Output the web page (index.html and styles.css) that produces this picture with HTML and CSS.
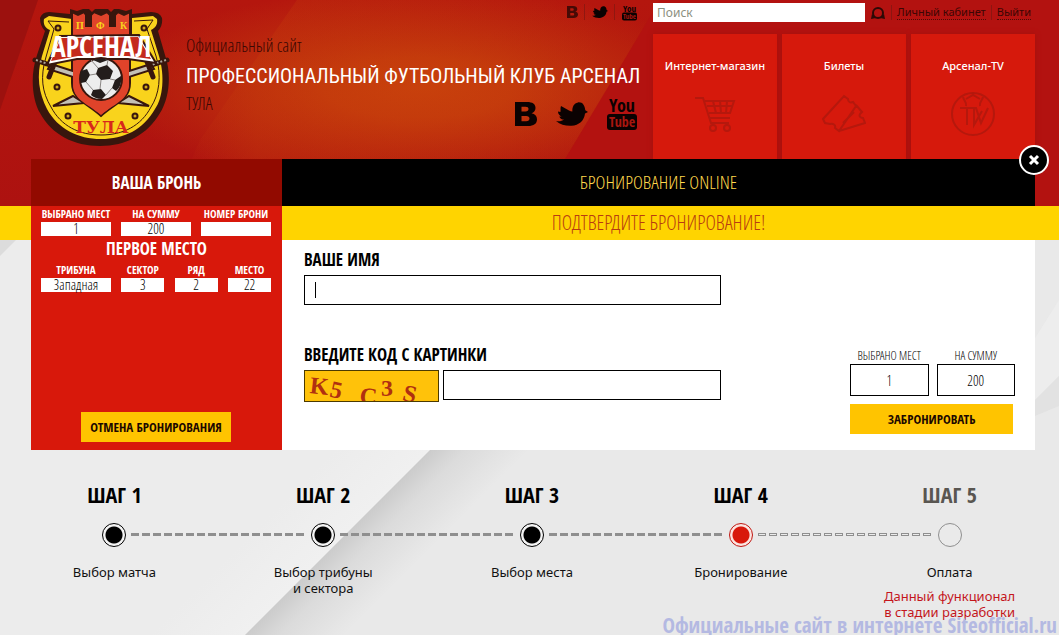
FILE: index.html
```
<!DOCTYPE html>
<html lang="ru">
<head>
<meta charset="utf-8">
<title>Бронирование online</title>
<link rel="stylesheet" href="styles.css">
</head>
<body>
<svg class="defs" aria-hidden="true">
  <symbol id="vk" viewBox="0 0 22 24"><path fill-rule="evenodd" d="M0 0h12c5.500 0 8.500 2 8.500 6 0 2.700-1.500 4.400-4 5.200 3.400.7 5.500 2.800 5.500 6 0 4.500-3.300 6.800-9 6.800H0zM6.500 4.700v4.700h4c2 0 3-.8 3-2.400s-1-2.300-3-2.300zM6.500 14v5.200h4.700c2.200 0 3.300-.9 3.300-2.600S13.400 14 11.200 14z"/></symbol>
  <symbol id="tw" viewBox="0 0 32 24"><path d="M0 19c3 .8 6 .2 8-1.400-2.500 0-4-1.300-4.700-3.200h2.400C3.500 13.600 2 12 2 9.500l2.400.6C5 8 4 6.500 5 4l8 4.500c1.200.6 2.300.9 3.400 1C16 5 18 1 22 .4c2.300-.3 4.300.6 5.500 2.300 1 1.600 1.500 3.500 1.800 5.500L32 10l-3 1.500c-.7 7-6 12-13.500 12.300C9.500 24 4.500 23 0 19z"/></symbol>
</svg>
<div class="page">
  <svg class="backdrop" viewBox="0 0 1059 635" preserveAspectRatio="xMidYMin slice" aria-hidden="true">
    <defs>
      <linearGradient id="shade" gradientUnits="userSpaceOnUse" x1="337" y1="542" x2="387" y2="592"><stop offset="0" stop-color="#cbcbcb"/><stop offset=".35" stop-color="#dbdbdb"/><stop offset="1" stop-color="#e9e9e9"/></linearGradient>
      <linearGradient id="light" gradientUnits="userSpaceOnUse" x1="290" y1="495" x2="337" y2="542"><stop offset="0" stop-color="#ececec"/><stop offset="1" stop-color="#f0f0f0"/></linearGradient>
      <linearGradient id="glow" x1="0" x2="1" y1="0" y2="0"><stop offset="0" stop-color="#c8420b" stop-opacity="0"/><stop offset=".2" stop-color="#c8420b" stop-opacity=".25"/><stop offset="1" stop-color="#c8420b" stop-opacity="0"/></linearGradient>
    </defs>
    <path fill="#9c110e" d="M0 0h38L0 110z"/>
    <path fill="url(#glow)" d="M297 0L200 140l-28 66h428V0z"/>
    <path fill="#b31210" d="M660 0L565 159l-28 47h522V0z"/>
    <path fill="#ececec" d="M0 240h1059v395H0z"/>
    <path fill="url(#light)" d="M0 300L60 240h580L245 635H0z"/>
    <path fill="url(#shade)" d="M245 635L640 240h419v395z"/>
    <path fill="#dcdcdc" d="M0 240h16L0 256z"/>
    <path fill="#f2f2f2" d="M1059 300v76l-74 74h-20z" opacity=".5"/>
    <path fill="#dedede" d="M1059 376v30l-24 10v-16z" opacity=".6"/>
  </svg>

  <header class="header">
    <svg class="logo" viewBox="0 0 140 146" role="img" aria-label="ПФК Арсенал Тула">
      <path fill="#38160d" d="M9 18Q11 12 18 12l21 2V9l7 2 6-2h6l3 3 3-3h13l3 3 3-3h5l7 2 6-2v5l19-2q9 0 11 6 1 8-4 13l7 24c7 20 4 44-5 58-13 22-34 33-60 33s-48-11-60-33C1 99-1 75 6 55l8-24Q9 26 9 18z"/>
      <path fill="#f9d31c" d="M13 19l5-3 23 3v16h60V18l21-2 4 3c1 6-2 9-6 11l8 26c6 20 4 42-4 53-12 21-31 30-54 30s-43-10-54-30C8 93 5 76 11 56l8-26c-5-2-7-6-6-11z"/>
      <path fill="none" stroke="#38160d" d="M17 21l21 1M103 21l19-1-6 9 9 27c6 20 3 39-5 51-10 19-28 28-50 28s-40-9-50-28C11 92 9 77 15 57l8-28-6-8"/>
      <path fill="#e0432a" stroke="#38160d" stroke-width="2" d="M41 12l6 3 6-3 2 3v11h5V15l3-3 7 3 6-3 3 3v11h5V15l3-3 6 3 6-3v71c0 17-15 20-29 33-14-13-29-16-29-33z"/>
      <g class="logo-small" fill="#f9d31c"><text x="45" y="29">П</text><text x="65" y="29">Ф</text><text x="89" y="29">К</text></g>
      <g fill="#d4ab19" stroke="#38160d" stroke-width="2"><circle cx="27" cy="28" r="2.500"/><circle cx="113" cy="28" r="2.500"/><circle cx="26" cy="87" r="2.500"/><circle cx="115" cy="87" r="2.500"/><circle cx="37" cy="116" r="2.500"/><circle cx="104" cy="116" r="2.500"/></g>
      <path fill="#c4c0b6" stroke="#38160d" stroke-width="2" d="M20 64l25 8v6l-28-9zM120 64L95 72v6l28-9zM22 106l20-10 11 7zM118 106L98 96l-11 7z"/>
      <path stroke="#38160d" stroke-width="5" stroke-linecap="round" d="M4 60l18 6M136 60l-18 6M25 59l-7 18M115 59l7 18"/>
      <path stroke="#aaa59b" stroke-dasharray="2 2" stroke-width="2" d="M5 60l15 5M135 60l-15 5"/>
      <path fill="#fff" stroke="#38160d" stroke-width="2" d="M29 36l79-1 17 28-28-4H46L16 65z"/>
      <path fill="#c42a1c" d="M30 38l77-1 13 22-23-3H47l-27 5z"/>
      <text class="logo-name" x="70" y="57" text-anchor="middle">АРСЕНАЛ</text>
      <path fill="#e0432a" d="M42 62h56v22c0 16-14 19-28 31-14-12-28-15-28-31z"/>
      <circle cx="70" cy="79" r="21" fill="#ededed" stroke="#38160d" stroke-width="2"/>
      <path fill="#231d1b" d="M67 68l9-3 6 6-3 8-9 1-5-6zM50 71l6-2 3 6-4 7-5 1c-1-5-1-8 0-12zM62 90l8-1 5 6-4 4c-5 0-9-2-11-4zM84 80l6-4c1 6-1 12-5 15l-4-3zM62 60c5-2 11-2 15 0l-8 3z"/>
      <path fill="none" stroke="#8b8785" d="M65 74l-6 1M70 80l-1 9M79 79l5 1M76 65l1-5M55 82l7 8M75 95l6-7M67 68l-7-8"/>
      <text class="logo-city" x="70" y="133" text-anchor="middle">ТУЛА</text>
    </svg>

    <div class="brand">
      <nav class="social-small" aria-label="Социальные сети">
        <a href="#" aria-label="ВКонтакте"><svg width="11" height="12" opacity=".65"><use href="#vk"/></svg></a>
        <a href="#" aria-label="Twitter"><svg width="16" height="12"><use href="#tw"/></svg></a>
        <a href="#" aria-label="YouTube"><svg width="15" height="17" viewBox="0 0 30 34"><text x="15" y="15" text-anchor="middle" class="yt-text" font-size="18">You</text><rect y="17" width="30" height="16" rx="4"/><text x="15" y="30" text-anchor="middle" class="yt-text yt-cut" font-size="14">Tube</text></svg></a>
      </nav>
      <p class="brand-note">Официальный сайт</p>
      <h1 class="brand-name">ПРОФЕССИОНАЛЬНЫЙ ФУТБОЛЬНЫЙ КЛУБ АРСЕНАЛ</h1>
      <div class="brand-foot">
        <p class="brand-note">ТУЛА</p>
        <nav class="social-big" aria-label="Мы в сетях">
          <a href="#" aria-label="ВКонтакте"><svg width="22" height="24"><use href="#vk"/></svg></a>
          <a href="#" aria-label="Twitter"><svg width="32" height="24"><use href="#tw"/></svg></a>
          <a href="#" aria-label="YouTube"><svg width="30" height="34" viewBox="0 0 30 34"><text x="15" y="15" text-anchor="middle" class="yt-text" font-size="18">You</text><rect y="17" width="30" height="16" rx="3"/><text x="15" y="30" text-anchor="middle" class="yt-text yt-cut" font-size="14">Tube</text></svg></a>
        </nav>
      </div>
    </div>

    <div class="side">
      <div class="tools">
        <input class="search" type="search" placeholder="Поиск" aria-label="Поиск">
        <button class="search-go" type="button" aria-label="Найти"><svg width="14" height="14" viewBox="0 0 14 14"><circle cx="7" cy="7" r="5" fill="none" stroke="#2d0906" stroke-width="2"/><path fill="#2d0906" d="M0 13l1-5 4 4zM14 13l-1-5-4 4z"/></svg></button>
        <a class="tool-link" href="#"><span>Личный кабинет</span></a>
        <a class="tool-link" href="#"><span>Выйти</span></a>
      </div>
      <nav class="tiles">
        <a class="tile" href="#">Интернет-магазин
          <svg width="44" height="44" viewBox="0 0 44 44"><path d="M2 6h8l8 25h18M12 9h29l-4 12H16M17 26h20M14 14h26M20 9l3 12M27 9l1 12M34 9l-1 12"/><circle cx="20" cy="36" r="3"/><circle cx="34" cy="36" r="3"/></svg></a>
        <a class="tile" href="#">Билеты
          <svg width="44" height="44" viewBox="0 0 44 44"><path d="M1 27L22 4l4 3c0 3 2 4 5 3l3 4-17 25-4-3c1-3-2-5-5-4l-5-1zM17 39l26-8-2-5c-3 0-4-2-3-4l2-2-6-7M21 31l11-11"/></svg></a>
        <a class="tile" href="#">Арсенал-TV
          <svg width="44" height="44" viewBox="0 0 44 44"><circle cx="22" cy="22" r="21"/><path d="M9 16h16l5 15 7-15M16 16v17M23 17v16l8-14M12 5c1 4 4 5 3 9M32 5c-1 4-4 5-3 9M15 7l7-4 7 4"/></svg></a>
      </nav>
    </div>
  </header>

  <main>
    <section class="modal">
      <button class="close" type="button" aria-label="Закрыть"><svg width="12" height="12" viewBox="0 0 12 12"><path stroke="#fff" stroke-width="3" d="M2 2l8 8M10 2l-8 8"/></svg></button>
      <aside class="booking">
        <h2 class="booking-title">ВАША БРОНЬ</h2>
        <dl class="facts facts-three">
          <div><dt>ВЫБРАНО МЕСТ</dt><dd>1</dd></div>
          <div><dt>НА СУММУ</dt><dd>200</dd></div>
          <div><dt>НОМЕР БРОНИ</dt><dd></dd></div>
        </dl>
        <h3 class="booking-seat">ПЕРВОЕ МЕСТО</h3>
        <dl class="facts facts-four">
          <div><dt>ТРИБУНА</dt><dd>Западная</dd></div>
          <div><dt>СЕКТОР</dt><dd>3</dd></div>
          <div><dt>РЯД</dt><dd>2</dd></div>
          <div><dt>МЕСТО</dt><dd>22</dd></div>
        </dl>
        <button class="btn cancel" type="button">ОТМЕНА БРОНИРОВАНИЯ</button>
      </aside>
      <div class="dialog">
        <h2 class="dialog-title">БРОНИРОВАНИЕ ONLINE</h2>
        <p class="dialog-note">ПОДТВЕРДИТЕ БРОНИРОВАНИЕ!</p>
        <form class="form">
          <div class="fields">
            <label class="label" for="name">ВАШЕ ИМЯ</label>
            <input class="field field-active" id="name" type="text">
            <label class="label label-code" for="code">ВВЕДИТЕ КОД С КАРТИНКИ</label>
            <div class="code-row">
              <svg class="captcha" viewBox="0 0 133 30" role="img" aria-label="Код"><text x="5" y="23" transform="rotate(6 14 16)">K</text><text x="25" y="27" transform="rotate(12 32 20)">5</text><text x="55" y="33" transform="rotate(6 62 24)">C</text><text x="76" y="25">3</text><text x="98" y="31" transform="rotate(14 105 24)">S</text></svg>
              <input class="field" id="code" type="text">
            </div>
          </div>
          <div class="summary">
            <div class="totals">
              <label>ВЫБРАНО МЕСТ<input type="text" value="1" readonly></label>
              <label>НА СУММУ<input type="text" value="200" readonly></label>
            </div>
            <button class="btn reserve" type="button">ЗАБРОНИРОВАТЬ</button>
          </div>
        </form>
      </div>
    </section>

    <ol class="steps">
      <li class="step"><h3>ШАГ 1</h3><div class="track"><i class="dot"></i></div><p>Выбор матча</p></li>
      <li class="step"><h3>ШАГ 2</h3><div class="track"><i class="dot"></i></div><p>Выбор трибуны<br>и сектора</p></li>
      <li class="step"><h3>ШАГ 3</h3><div class="track"><i class="dot"></i></div><p>Выбор места</p></li>
      <li class="step step-current"><h3>ШАГ 4</h3><div class="track"><i class="dot"></i></div><p>Бронирование</p></li>
      <li class="step step-next"><h3>ШАГ 5</h3><div class="track"><i class="dot"></i></div><p>Оплата</p><p class="warning">Данный функционал<br>в стадии разработки</p></li>
    </ol>
  </main>
  <p class="stamp">Официальные сайт в интернете Siteofficial.ru</p>
</div>
</body>
</html>
```
FILE: styles.css
```
* { box-sizing: border-box; }
body, h1, h2, h3, p, dl, dd, ol { margin: 0; padding: 0; }
body {
  --bold: "Open Sans Condensed", "Roboto Condensed", sans-serif;
  --thin: "Open Sans Condensed Light", "Roboto Condensed", sans-serif;
  font-family: "Noto Sans", sans-serif;
  font-size: 13px;
  color: #111;
}
button, input { font: inherit; color: inherit; margin: 0; border-radius: 0; }
button { cursor: pointer; border: 0; }
a { color: inherit; text-decoration: none; }
.defs { position: absolute; width: 0; height: 0; }

.page {
  position: relative;
  z-index: 0;
  min-height: 100vh;
  overflow: hidden;
  background:
    radial-gradient(ellipse 310px 100px at 420px 88px, #c8400c, #c43a0c 30%, transparent) 0 0 / 100% 206px no-repeat,
    linear-gradient(#b4160e, #ad1210) 0 0 / 100% 206px no-repeat,
    #ececec;
}
.page::before { content: ""; position: absolute; z-index: -1; top: 206px; left: 0; right: 0; height: 34px; background: #ffd400; }
.backdrop { position: absolute; z-index: -2; inset: 0; width: 100%; height: 100%; }

/* header */
.header { display: flex; padding: 0 24px 0 31px; }
.logo { flex: none; width: 140px; height: 146px; }
.logo-small { font: 700 10px "Liberation Serif", serif; }
.logo-name { font: 700 28px var(--bold); fill: #fff; }
.logo-city { font: 700 17px "DejaVu Serif", serif; fill: #d7281b; }
.brand { flex: 1; min-width: 0; padding: 0 16px 0 15px; font-family: "Roboto Condensed", sans-serif; white-space: nowrap; }
.social-small { display: flex; justify-content: flex-end; align-items: center; height: 24px; margin-bottom: 9px; }
.social-small a { display: flex; align-items: center; height: 16px; padding: 0 0 0 13px; }
.social-small a:not(:last-child) { padding-right: 6px; border-right: 1px solid #8f1710; }
.social-small a + a { padding-left: 7px; }
.brand-note { font: 300 18px/24px var(--thin); color: #3a0804; }
.brand-name { font-size: 20px; line-height: 38px; font-weight: 400; color: #fff; }
.brand-foot { display: flex; justify-content: space-between; align-items: flex-start; }
.brand-foot .brand-note { line-height: 16px; }
.social-big { display: flex; gap: 19px; align-items: center; padding-top: 2px; }
.social-big a, .social-small a { fill: #0b0202; }
.social-big svg, .social-small svg { display: block; }
.yt-text { font-family: var(--bold); font-weight: 700; }
.yt-cut { fill: #a8160f; }

.side { flex: none; width: 382px; }
.tools { display: flex; align-items: center; height: 34px; padding-bottom: 9px; }
.search { flex: none; width: 212px; height: 19px; padding: 0 4px; border: 0; background: #fff; font-size: 12px; outline: 0; }
.search::placeholder { color: #8c9080; opacity: 1; }
.search-go { display: flex; padding: 0; margin: 0 6px; background: none; }
.tool-link { padding: 0 5px; border-left: 1px solid #8c1511; font-size: 11px; line-height: 18px; color: #3c0604; white-space: nowrap; }
.tool-link span { display: block; line-height: 14px; border-bottom: 1px dotted #500a07; }
.tiles { display: grid; grid-template-columns: repeat(3, 1fr); gap: 5px; }
.tile { display: flex; flex-direction: column; align-items: center; height: 125px; padding-top: 23px; background: #d6190c; color: #fff; font-size: 11px; line-height: 18px; font-weight: 500; box-shadow: 0 0 5px #a3120c; }
.tile svg { margin-top: 17px; fill: none; stroke: #b5180d; stroke-width: 2; }

/* booking window */
.modal { position: relative; display: flex; min-height: 291px; margin: 0 24px 0 31px; background: #fff; font-family: "Roboto Condensed", sans-serif; }
.close { position: absolute; top: -14px; right: -14px; display: flex; align-items: center; justify-content: center; width: 30px; height: 30px; padding: 0; border: 2px solid #fff; border-radius: 50%; background: #000; }
.booking { display: flex; flex-direction: column; flex: none; width: 251px; padding-bottom: 8px; background: #d8180b; color: #fff; text-align: center; }
.booking-title { background: #920a00; font: 700 17px/47px var(--bold); }
.facts { display: grid; column-gap: 10px; padding: 0 11px 0 10px; }
.facts-three { grid-template-columns: repeat(3, 70px); }
.facts-four { grid-template-columns: 70px 43px 43px 43px; justify-content: space-between; }
.facts dt { display: flex; justify-content: center; font: 700 11px/16px var(--bold); white-space: nowrap; }
.facts dd { height: 14px; background: #fff; color: #000; font: 300 14px/14px var(--thin); }
.booking-seat { font: 700 17px/26px var(--bold); }
.btn { height: 30px; padding: 0; background: #ffc400; color: #1c0800; font: 700 13px var(--bold); }
.cancel { width: 150px; margin: auto auto 0 50px; }

.dialog { flex: 1; min-width: 0; }
.dialog-title { background: #000; color: #ffd84c; font: 300 19px/47px var(--thin); text-align: center; }
.dialog-note { background: #ffd400; color: #b83c10; font: 300 20px/34px var(--thin); text-align: center; }
.form { display: flex; justify-content: space-between; padding: 8px 20px 16px 22px; }
.fields { flex: none; width: 417px; }
.label { display: block; font: 700 17px/24px var(--bold); color: #000; }
.field { display: block; width: 100%; height: 30px; margin-top: 3px; padding: 0 12px; border: 1px solid #000; background: #fff; font-size: 15px; outline: 0; }
.field-active { background: linear-gradient(#000, #000) 10px 6px / 1px 16px no-repeat #fff; }
.label-code { margin-top: 38px; }
.code-row { display: flex; gap: 4px; margin-top: 3px; }
.code-row .field { flex: 1; margin: 0; }
.captcha { flex: none; width: 135px; height: 32px; border: 1px solid #4c3a00; background: #ffc20a; font: 700 24px "Liberation Serif", serif; fill: #b03010; }
.summary { width: 165px; padding-top: 100px; }
.totals { display: grid; grid-template-columns: 1fr 1fr; gap: 8px; }
.totals label { font: 300 12px/16px var(--thin); text-align: center; white-space: nowrap; color: #000; }
.totals input { display: block; width: 100%; height: 32px; border: 1px solid #000; background: #fff; text-align: center; font-size: 14px; }
.reserve { width: 163px; margin-top: 8px; }

/* steps */
.steps { display: grid; grid-template-columns: repeat(5, 1fr); margin: 28px 5px 0 10px; list-style: none; text-align: center; }
.step h3 { font: 700 22px/32px var(--bold); color: #000; }
.track { position: relative; display: flex; justify-content: center; margin: 13px 0 17px; }
.dot { width: 24px; height: 24px; border: 1px solid #000; border-radius: 50%; background: radial-gradient(circle, #000 8px, #f4f4f4 9px); }
.step:not(:last-child) .track::after { content: ""; position: absolute; top: 10px; left: calc(50% + 17px); right: calc(-50% + 18px); height: 3px; background: repeating-linear-gradient(90deg, #8f8f8f 0 8px, transparent 8px 11px); }
.step p { line-height: 16px; }
.step-current .dot { border-color: #c01812; background: radial-gradient(circle, #d8180b 8px, #fbe4e0 9px); }
.step-current .track::before { content: ""; position: absolute; z-index: 1; top: 11px; left: calc(50% + 17px); right: calc(-50% + 18px); height: 1px; background: repeating-linear-gradient(90deg, transparent 0 1px, #ececec 1px 7px, transparent 7px 11px); }
.step-next h3 { color: #595651; }
.step-next .dot { border-color: #8f8f8f; background: #eaeaea; }
.step .warning { margin: 8px 0 0; color: #c4161c; white-space: nowrap; }

.stamp { position: absolute; right: 2px; bottom: -2px; font: 700 21px/24px var(--bold); color: #b4b9e2; white-space: nowrap; }
```
